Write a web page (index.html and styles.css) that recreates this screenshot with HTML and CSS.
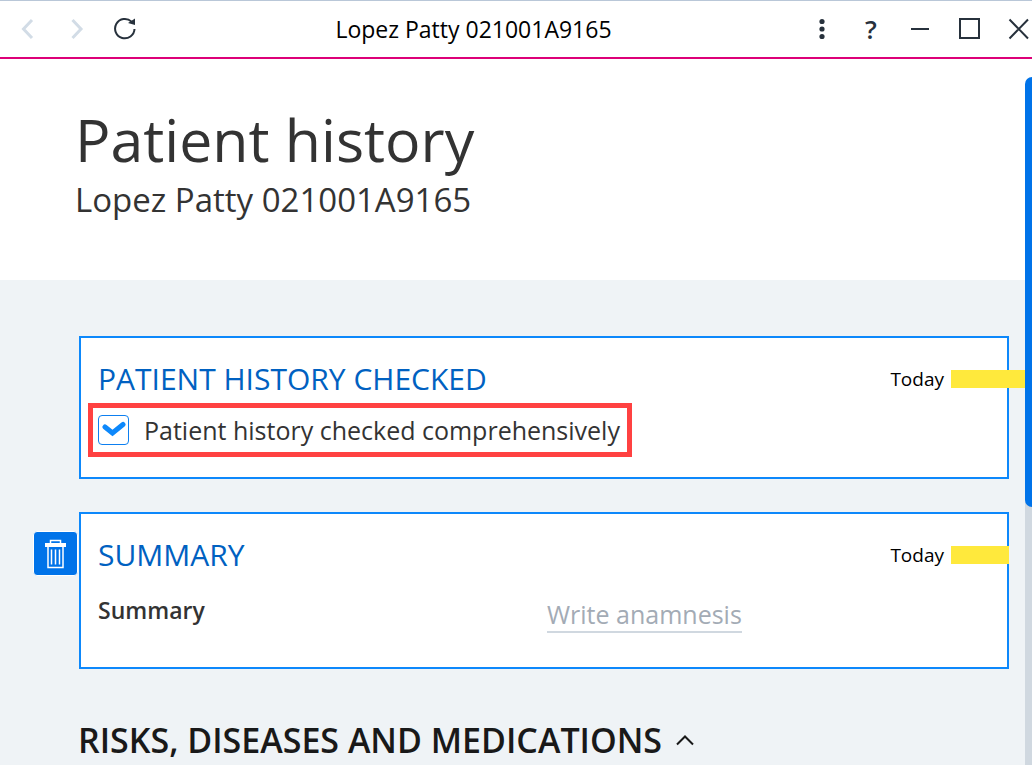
FILE: index.html
```html
<!DOCTYPE html>
<html lang="en">
<head>
<meta charset="utf-8">
<title>Patient history</title>
<link rel="stylesheet" href="styles.css">
</head>
<body>
<div class="window">
  <header class="titlebar">
    <nav class="titlebar-group" aria-label="History">
      <button class="icon-button muted" type="button" aria-label="Back">
        <svg width="24" height="24" viewBox="0 0 24 24"><path class="bold" d="M17 3L8.500 12L17 21"/></svg>
      </button>
      <button class="icon-button muted" type="button" aria-label="Forward">
        <svg width="24" height="24" viewBox="0 0 24 24"><path class="bold" d="M8.500 3L17 12L8.500 21"/></svg>
      </button>
      <button class="icon-button" type="button" aria-label="Reload">
        <svg width="24" height="24" viewBox="0 0 24 24"><path d="M21.500 12A9.700 9.700 0 1 1 18.500 4.600"/><path class="solid" d="M22 1.500V8L15 6Z"/></svg>
      </button>
    </nav>
    <div class="window-title">Lopez Patty 021001A9165</div>
    <div class="titlebar-group">
      <button class="icon-button" type="button" aria-label="More">
        <svg width="24" height="24" viewBox="0 0 24 24"><g class="solid"><circle cx="12" cy="4.500" r="2.600"/><circle cx="12" cy="12" r="2.600"/><circle cx="12" cy="19.500" r="2.600"/></g></svg>
      </button>
      <button class="icon-button help" type="button" aria-label="Help">?</button>
      <button class="icon-button" type="button" aria-label="Minimize">
        <svg width="24" height="24" viewBox="0 0 24 24"><path d="M3 12H21"/></svg>
      </button>
      <button class="icon-button" type="button" aria-label="Maximize">
        <svg width="24" height="24" viewBox="0 0 24 24"><path d="M3 2H22V21H3Z"/></svg>
      </button>
      <button class="icon-button" type="button" aria-label="Close">
        <svg width="24" height="24" viewBox="0 0 24 24"><path d="M3.500 2.500L22 21.500M22 2.500L3.500 21.500"/></svg>
      </button>
    </div>
  </header>

  <div class="viewport">
    <main class="page">
      <div class="page-header">
        <h1 class="page-title">Patient history</h1>
        <p class="page-patient">Lopez Patty 021001A9165</p>
      </div>

      <div class="sections">
        <div class="entry">
          <div class="gutter"></div>
          <section class="card">
            <div class="card-head">
              <h2 class="card-title">PATIENT HISTORY CHECKED</h2>
              <div class="stamp">Today <span class="redacted wide"></span></div>
            </div>
            <label class="check">
              <input class="check-input" type="checkbox" checked>
              <span class="check-box"><svg width="24" height="18" viewBox="0 0 24 18"><path d="M3 6L10.500 12L21 3.500"/></svg></span>
              Patient history checked comprehensively
            </label>
          </section>
        </div>

        <div class="entry">
          <div class="gutter">
            <button class="delete" type="button" aria-label="Delete summary">
              <svg width="23" height="30" viewBox="0 0 23 30"><path class="solid" d="M1 4H22V8H1Z"/><path class="fine" d="M6.500 4V1.500H16.500V4"/><path class="fine" d="M4 8V28.500H19V8"/><path class="fine" d="M7.500 10.500V25.500M11.500 10.500V25.500M15.500 10.500V25.500"/></svg>
            </button>
          </div>
          <section class="card">
            <div class="card-head">
              <h2 class="card-title">SUMMARY</h2>
              <div class="stamp">Today <span class="redacted"></span></div>
            </div>
            <div class="field">
              <span class="field-label">Summary</span>
              <a class="field-value" href="#anamnesis">Write anamnesis</a>
            </div>
          </section>
        </div>

        <h2 class="group-title">
          <button class="group-toggle" type="button" aria-expanded="true">RISKS, DISEASES AND MEDICATIONS
            <svg width="20" height="14" viewBox="0 0 20 14"><path d="M2 11.500L10 3.500L18 11.500"/></svg>
          </button>
        </h2>
      </div>
    </main>
    <div class="scroll-track"><div class="scroll-thumb"></div></div>
  </div>
</div>
</body>
</html>
```

FILE: styles.css
```css
* {
  box-sizing: border-box;
}

body {
  margin: 0;
  background: #fff;
  color: #333;
  font-family: "Open Sans", "Noto Sans", sans-serif;
}

h1, h2, p {
  margin: 0;
  font-weight: 400;
}

button {
  padding: 0;
  border: 0;
  background: none;
  color: inherit;
  font: inherit;
}

svg {
  display: block;
  fill: none;
  stroke: currentColor;
  stroke-width: 2;
}

.solid {
  fill: currentColor;
  stroke: none;
}

.bold {
  stroke-width: 3;
}

.fine {
  stroke-width: 1.5;
}

.window {
  display: flex;
  flex-direction: column;
  height: 100vh;
  overflow: hidden;
}

/* Title bar */
.titlebar {
  display: flex;
  flex: none;
  align-items: center;
  justify-content: space-between;
  height: 59px;
  padding: 0 2px 1px 15px;
  border-top: 1px solid #b9c7d8;
  border-bottom: 2px solid #dd0078;
  color: #27313c;
}

.titlebar-group {
  display: flex;
  gap: 25px;
}

.icon-button {
  display: grid;
  place-items: center;
  width: 24px;
  height: 24px;
}

.muted {
  color: #d2dce6;
}

.help {
  font-size: 26px;
  font-weight: 600;
  line-height: 24px;
}

.window-title {
  color: #000;
  font-size: 23px;
  line-height: 32px;
}

/* Scrolling area */
.viewport {
  display: flex;
  flex: 1;
  min-height: 0;
}

.page {
  display: flex;
  flex: 1;
  flex-direction: column;
  min-width: 0;
}

.scroll-track {
  flex: none;
  width: 7px;
  margin-top: 18px;
  background: linear-gradient(#fff 50px, #d0d8e0 50px);
}

.scroll-thumb {
  height: 430px;
  border-radius: 8px 0 0 8px;
  background: #0073e9;
}

.page-header {
  flex: none;
  padding: 40px 75px 60px;
}

.page-title {
  font-size: 59px;
  line-height: 80px;
}

.page-patient {
  font-size: 33px;
  line-height: 41px;
}

/* Entries */
.sections {
  display: flex;
  flex: 1;
  flex-direction: column;
  gap: 33px;
  padding: 56px 16px 0 33px;
  background: #eff3f6;
}

.entry {
  display: flex;
}

.gutter {
  flex: none;
  width: 46px;
  padding-top: 19px;
}

.delete {
  display: grid;
  place-items: center;
  width: 45px;
  height: 45px;
  border: 1px solid #fff;
  border-radius: 4px;
  background: #0073e9;
  color: #fff;
}

.card {
  flex: 1;
  min-width: 0;
  padding: 19px 0 20px 17px;
  border: 2px solid #0d88fb;
  background: #fff;
}

.card-head {
  display: flex;
  align-items: center;
  justify-content: space-between;
  margin-bottom: 2px;
}

.card-title {
  color: #0061c1;
  font-size: 30px;
  line-height: 44px;
}

.stamp {
  display: flex;
  gap: 7px;
  align-items: center;
  margin-right: -18px;
  color: #000;
  font-size: 19px;
  line-height: 26px;
}

.redacted {
  width: 58px;
  height: 18px;
  margin-right: 16px;
  background: #ffe93c;
}

.wide {
  width: 74px;
  margin-right: 0;
}

.check {
  display: inline-flex;
  align-items: center;
  gap: 15px;
  height: 54px;
  margin-left: -10px;
  padding: 0 7px 0 5px;
  border: 5px solid #ff4141;
  font-size: 25px;
  line-height: 32px;
}

.check-input {
  position: absolute;
  opacity: 0;
}

.check-box {
  display: grid;
  place-items: center;
  width: 31px;
  height: 30px;
  border: 1px solid #0d7ff0;
  border-radius: 4px;
  color: #0d88fb;
}

.check-box svg {
  stroke-width: 5;
  stroke-linecap: round;
}

.field {
  display: grid;
  grid-template-columns: 449px 1fr;
  align-items: start;
  padding: 14px 0 14px;
  font-size: 25px;
  line-height: 34px;
}

.field-label {
  font-size: 23px;
  font-weight: 600;
}

.field-value {
  justify-self: start;
  margin-top: 4px;
  border-bottom: 2px solid #d0d8e0;
  color: #a3abb5;
  text-decoration: none;
}

.group-title {
  padding: 15px 0 0 45px;
}

.group-toggle {
  display: flex;
  gap: 13px;
  align-items: center;
  color: #191919;
  font-size: 34px;
  font-weight: 600;
  line-height: 46px;
  white-space: nowrap;
}
```
